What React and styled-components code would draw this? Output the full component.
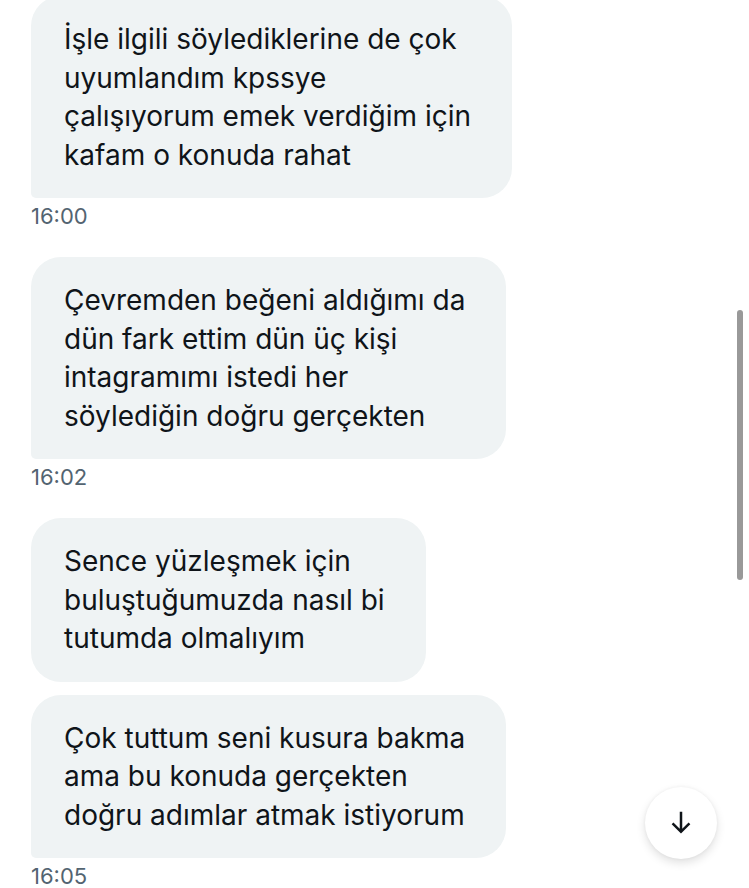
import React from "react";
import styled, { createGlobalStyle } from "styled-components";

const messages = [
  {
    lines: [
      "İşle ilgili söylediklerine de çok",
      "uyumlandım kpssye",
      "çalışıyorum emek verdiğim için",
      "kafam o konuda rahat",
    ],
    time: "16:00",
  },
  {
    lines: [
      "Çevremden beğeni aldığımı da",
      "dün fark ettim dün üç kişi",
      "intagramımı istedi her",
      "söylediğin doğru gerçekten",
    ],
    time: "16:02",
  },
  {
    lines: ["Sence yüzleşmek için", "buluştuğumuzda nasıl bi", "tutumda olmalıyım"],
  },
  {
    lines: [
      "Çok tuttum seni kusura bakma",
      "ama bu konuda gerçekten",
      "doğru adımlar atmak istiyorum",
    ],
    time: "16:05",
  },
];

function App() {
  return (
    <>
      <GlobalStyle />
      <Conversation>
        {messages.map((msg, index) => (
          <Entry key={index} grouped={!msg.time}>
            <Bubble last={!!msg.time}>
              {msg.lines.map((line, i) => (
                <Line key={i}>{line}</Line>
              ))}
            </Bubble>
            {msg.time && <Time>{msg.time}</Time>}
          </Entry>
        ))}
      </Conversation>
      <ScrollThumb />
      <ScrollDown aria-label="Scroll down">
        <svg viewBox="0 0 24 24" width="30" height="30">
          <path
            fill="#0f1419"
            d="M13 3v13.59l5.043-5.05 1.414 1.42L12 20.41l-7.457-7.44 1.414-1.42L11 16.59V3h2z"
          />
        </svg>
      </ScrollDown>
    </>
  );
}

export default App;

const GlobalStyle = createGlobalStyle`
  html, body {
    margin: 0;
    background: #ffffff;
    overflow: hidden;
  }
  body {
    font-family: Inter, "Noto Sans", sans-serif;
    color: #0f1419;
  }
`;

const Conversation = styled.div`
  display: flex;
  flex-direction: column;
  align-items: flex-start;
  padding-left: 31px;
  margin-top: -4px;
`;

const Entry = styled.div`
  display: flex;
  flex-direction: column;
  align-items: flex-start;
  margin-bottom: ${(props) => (props.grouped ? "13px" : "28px")};
`;

const Bubble = styled.div`
  background: #eff3f4;
  padding: 24px 41px 24px 33px;
  border-radius: ${(props) => (props.last ? "30px 30px 30px 5px" : "30px")};
  font-size: 28px;
  line-height: 38.5px;
  white-space: nowrap;
`;

const Line = styled.div``;

const Time = styled.div`
  margin-top: 5px;
  font-size: 22px;
  line-height: 26px;
  color: #536471;
`;

const ScrollThumb = styled.div`
  position: fixed;
  top: 310px;
  left: 737px;
  width: 6px;
  height: 270px;
  border-radius: 3px;
  background: #999999;
`;

const ScrollDown = styled.button`
  position: fixed;
  left: 645px;
  top: 787px;
  width: 72px;
  height: 72px;
  border: none;
  border-radius: 50%;
  background: #ffffff;
  box-shadow: 0 4px 10px rgba(0, 0, 0, 0.12), 0 0 4px rgba(0, 0, 0, 0.06);
  display: flex;
  align-items: center;
  justify-content: center;
  padding: 0;
`;
